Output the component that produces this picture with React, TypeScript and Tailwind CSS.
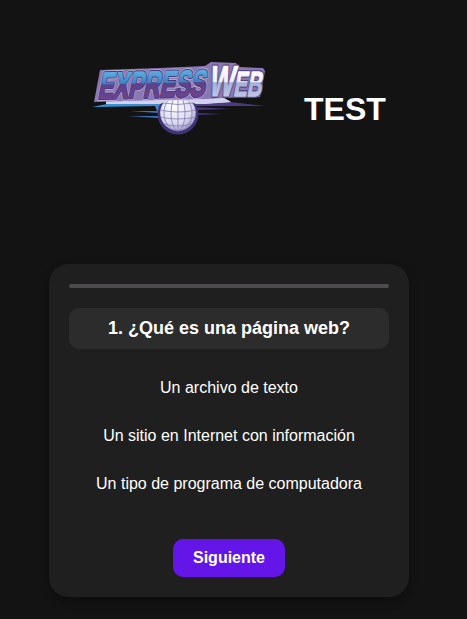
const options = [
  'Un archivo de texto',
  'Un sitio en Internet con información',
  'Un tipo de programa de computadora',
];

function Logo() {
  return (
    <svg className="overflow-visible" width="190" height="85" viewBox="85 55 190 85" role="img" aria-label="ExpressWeb">
      <defs>
        <linearGradient id="blue" gradientUnits="userSpaceOnUse" x1="0" y1="-27" x2="0" y2="0">
          <stop offset="0" stopColor="#62b0e2" />
          <stop offset="0.46" stopColor="#3c84c6" />
          <stop offset="0.5" stopColor="#5c4189" />
          <stop offset="1" stopColor="#6d448f" />
        </linearGradient>
        <linearGradient id="silver" gradientUnits="userSpaceOnUse" x1="0" y1="-30" x2="0" y2="0">
          <stop offset="0" stopColor="#ffffff" />
          <stop offset="0.52" stopColor="#f0effa" />
          <stop offset="0.56" stopColor="#a4b1d8" />
          <stop offset="1" stopColor="#bdc4e6" />
        </linearGradient>
        <linearGradient id="swoosh" x1="0" y1="0" x2="1" y2="0">
          <stop offset="0" stopColor="#2b9bdb" />
          <stop offset="0.42" stopColor="#4b83c8" />
          <stop offset="0.6" stopColor="#51438b" />
          <stop offset="1" stopColor="#45327c" />
        </linearGradient>
        <radialGradient id="globe" cx="0.4" cy="0.3" r="0.75">
          <stop offset="0" stopColor="#ffffff" />
          <stop offset="0.65" stopColor="#dcdaf0" />
          <stop offset="1" stopColor="#9d9aca" />
        </radialGradient>
      </defs>
      <path d="M92 107 L107 104 L107 102 L160 102 L222 101 L264 106 L198 106 L157 111 L155 106 Z" fill="url(#swoosh)" />
      <path d="M106 103 L160 97 L222 97 L231 102 L205 104 L160 104 Z" fill="#d2d2ed" />
      <path d="M130 111 L158 111 L158 113 Z M128 116 L158 116 L158 118 Z" fill="#3e70b5" />
      <path d="M197 107 L230 109 L197 110 Z M197 113 L223 114 L197 115 Z" fill="#45367f" />
      <circle cx="178" cy="114" r="20.5" fill="#403377" />
      <circle cx="178" cy="113" r="17.8" fill="url(#globe)" />
      <g fill="none" stroke="#827eb1" strokeWidth="0.8">
        <ellipse cx="178" cy="113" rx="7" ry="18" />
        <ellipse cx="178" cy="113" rx="14" ry="18" />
        <path d="M178 95 V131 M163 103 Q178 106 193 103 M160 110 Q178 114 196 110 M160 117 Q178 121 196 117 M164 124 Q178 128 192 124" />
      </g>
      <path d="M106 101 L204 98 L222 97 L231 102 L196 104 Q178 96 160 104 L106 104 Z" fill="#d2d2ed" />
      <path d="M100 70 L160 68 L205 66 L211 62 L236 63 L239 67 L263 68 L265 71 L260 97 L222 98 L208 99 L160 100 L94 102 Z" fill="#8978b2" />
      <g fontFamily="'Liberation Sans', Arial, sans-serif" fontWeight="700" strokeLinejoin="round">
        <g transform="translate(97.5 98.6) rotate(-1.4) skewX(-13)" fontSize="37">
          <text textLength="107" lengthAdjust="spacingAndGlyphs" fill="#b9afd9" stroke="#b9afd9" strokeWidth="5">EXPRESS</text>
          <text textLength="107" lengthAdjust="spacingAndGlyphs" fill="#49357b" stroke="#49357b" strokeWidth="3.2">EXPRESS</text>
          <text textLength="107" lengthAdjust="spacingAndGlyphs" fill="url(#blue)" stroke="url(#blue)" strokeWidth="1.3">EXPRESS</text>
        </g>
        <g transform="translate(208 96) skewX(-10)">
          <text fontSize="43" textLength="25" lengthAdjust="spacingAndGlyphs" fill="#584683" stroke="#584683" strokeWidth="4">W</text>
          <text x="25" fontSize="35" textLength="28" lengthAdjust="spacingAndGlyphs" fill="#584683" stroke="#584683" strokeWidth="4">EB</text>
          <text fontSize="43" textLength="25" lengthAdjust="spacingAndGlyphs" fill="url(#silver)" stroke="url(#silver)" strokeWidth="1.2">W</text>
          <text x="25" fontSize="35" textLength="28" lengthAdjust="spacingAndGlyphs" fill="url(#silver)" stroke="url(#silver)" strokeWidth="1.4">EB</text>
        </g>
      </g>
    </svg>
  );
}

export default function App() {
  return (
    <main className="h-[619px] w-full overflow-hidden bg-[#131313] font-['Liberation_Sans',Arial,sans-serif] text-white">
      <header className="flex h-[264px] pl-[85px] pt-[55px]">
        <Logo />
        <h1 className="ml-[29px] mt-[36px] text-[32px] leading-[37px] font-bold">TEST</h1>
      </header>
      <section className="ml-[49px] flex h-[333px] w-[360px] flex-col items-center rounded-[20px] bg-[#1f1f1f] p-5 text-center shadow-[0_4px_10px_rgba(0,0,0,0.3)]">
        <div className="h-1 w-full shrink-0 rounded-sm bg-[#4d4b4d]" />
        <h2 className="mt-5 h-[41px] w-full shrink-0 rounded-[10px] bg-[#2c2c2c] pt-[10px] text-[18px] leading-[21px] font-bold">1. ¿Qué es una página web?</h2>
        <ul className="mt-[15px] w-full">
          {options.map((option) => (
            <li key={option} className="h-12 text-[16px] leading-[48px]">{option}</li>
          ))}
        </ul>
        <button className="mt-[31px] h-[38px] w-[112px] shrink-0 rounded-[10px] bg-[#6415e8] text-[16px] leading-[18px] font-bold">Siguiente</button>
      </section>
    </main>
  );
}
